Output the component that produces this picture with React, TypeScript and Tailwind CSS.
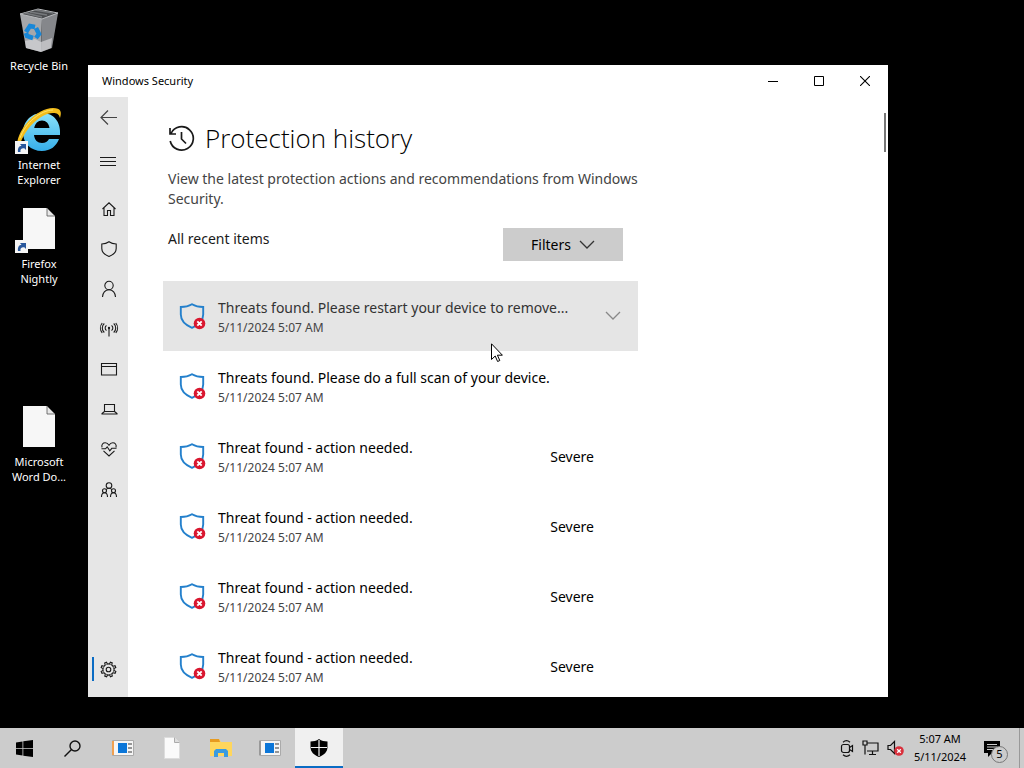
import type { ReactNode } from 'react'

const FONT = "font-['Noto_Sans','Open_Sans',sans-serif]"

type Threat = { title: string; date: string; severity?: string; selected?: boolean }

const THREATS: Threat[] = [
  { title: 'Threats found. Please restart your device to remove...', date: '5/11/2024 5:07 AM', selected: true },
  { title: 'Threats found. Please do a full scan of your device.', date: '5/11/2024 5:07 AM' },
  { title: 'Threat found - action needed.', date: '5/11/2024 5:07 AM', severity: 'Severe' },
  { title: 'Threat found - action needed.', date: '5/11/2024 5:07 AM', severity: 'Severe' },
  { title: 'Threat found - action needed.', date: '5/11/2024 5:07 AM', severity: 'Severe' },
  { title: 'Threat found - action needed.', date: '5/11/2024 5:07 AM', severity: 'Severe' },
]

const line = { fill: 'none', stroke: '#1a1a1a', strokeWidth: 1.1 }

const NAV: { name: string; icon: ReactNode }[] = [
  { name: 'Home', icon: <path d="M1.5 8 8 1.8 14.5 8M3 6.8v7.700h3.500V9.500h3v5H13V6.800" /> },
  { name: 'Virus & threat protection', icon: <path d="M8 .8C6 2.300 3.500 3 .8 3v4.500c0 3.800 3 6.300 7.200 8 4.200-1.700 7.200-4.200 7.200-8V3C12.500 3 10 2.300 8 .8z" /> },
  { name: 'Account protection', icon: <><circle cx="8" cy="4.500" r="4.200" /><path d="M1.500 16c0-4 2.700-7.300 6.500-7.300s6.500 3.300 6.500 7.300" /></> },
  { name: 'Firewall & network protection', icon: <><path d="M8 7v8.500M5.500 9.500a3 3 0 0 1 0-5M10.500 9.500a3 3 0 0 0 0-5M3.300 11.500a6 6 0 0 1 0-9M12.700 11.500a6 6 0 0 0 0-9M1.200 12a8 8 0 0 1 0-10M14.800 12a8 8 0 0 0 0-10" /><circle cx="8" cy="7" r=".6" /></> },
  { name: 'App & browser control', icon: <path d="M.5 2.500h15v11.500H.5zM.5 5.500h15" /> },
  { name: 'Device security', icon: <path d="M3.500 3.500h10v7h-10zM3.500 10.500 1 12.500v.5h15v-.5l-2.500-2" /> },
  { name: 'Device performance & health', icon: <path d="M1 6.300C.2 3.500 2 1.800 4.200 1.800 6 1.800 7.300 3 8 4.200c.7-1.200 2-2.400 3.800-2.400C14 1.800 15.800 3.500 15 6.300M.5 7.800h4l1.700-2 2.600 4 2-2.500h4.700M2.500 9.800 8 15l5.500-5.200" /> },
  { name: 'Family options', icon: <><circle cx="8" cy="4.500" r="2.800" /><circle cx="3.500" cy="9.800" r="2" /><circle cx="12.500" cy="9.800" r="2" /><path d="M.5 16c0-2.500 1-4.200 3-4.200s3 1.700 3 4.200M9.500 16c0-2.500 1-4.200 3-4.200s3 1.700 3 4.200M5 8.800c.8-1.100 1.800-1.500 3-1.500s2.200.4 3 1.500" /></> },
]

function GearIcon() {
  return (
    <svg width="17" height="17" viewBox="0 0 17 17" {...line}>
      <circle cx="8.500" cy="8.500" r="2.300" />
      <circle cx="8.500" cy="8.500" r="5.600" />
      {[0, 45, 90, 135, 180, 225, 270, 315].map((deg) => (
        <path key={deg} d="M7.300 3 7.500 1h2l.2 2" fill="#e6e6e6" transform={`rotate(${deg + 22} 8.500 8.500)`} />
      ))}
    </svg>
  )
}

function ThreatShield() {
  return (
    <svg className="shrink-0" width="28" height="28" viewBox="0 0 28 28">
      <path d="M13 2.200C9.500 4.300 6 5 1.800 5v7.500c0 6.300 4.200 10.300 11.200 13.300 7-3 11.200-7 11.200-13.300V5C20 5 16.500 4.300 13 2.200z" fill="none" stroke="#2480cc" strokeWidth="1.900" />
      <circle cx="20.500" cy="21.500" r="5.800" fill="#d9172f" />
      <path d="m18.300 19.300 4.400 4.400m0-4.400-4.400 4.400" stroke="#fff" strokeWidth="1.900" />
    </svg>
  )
}

function Chevron({ className }: { className: string }) {
  return (
    <svg className={className} width="16" height="10" viewBox="0 0 16 10" fill="none" stroke="currentColor" strokeWidth="1.300">
      <path d="m1 1 7 7 7-7" />
    </svg>
  )
}

function ShortcutBadge() {
  return (
    <>
      <rect x="0" y="35" width="13" height="13" fill="#f5f5f5" />
      <path d="M3 46c-.5-4 1-6 3.500-6.300L5 38h6v6l-1.700-1.700C6.500 42 5 43 5.500 46z" fill="#28579c" />
    </>
  )
}

function FileIcon({ shortcut }: { shortcut?: boolean }) {
  return (
    <svg width="48" height="48" viewBox="0 0 48 48">
      <path d="M8 3h24l8 8v33H8z" fill="#f7f7f7" />
      <path d="M32 3v8h8z" fill="#e8e8e8" stroke="#555" strokeWidth=".8" />
      {shortcut && <ShortcutBadge />}
    </svg>
  )
}

function RecycleIcon() {
  return (
    <svg width="48" height="48" viewBox="0 0 48 48">
      <path d="m5 7 22 4-1 34L11 41z" fill="#a5a7aa" />
      <path d="M27 11 43 6l-6 35-11 4z" fill="#85878b" />
      <path d="m5 7 18-5 20 4-16 6z" fill="#4a4c4f" stroke="#b9bbbe" />
      <path d="m10 6 17 4M15 5l17 3M20 3l18 3" stroke="#76797c" strokeWidth="1.500" />
      <path d="m10 34 10-2 6 3 11-4-1 10-10 4-15-4z" fill="#d5d6d8" opacity=".7" />
      <g fill="none" stroke="#1787d8" strokeWidth="4.500">
        <path d="m11 25 4-6 5 1" />
        <path d="m21 21 3 6-3 4" />
        <path d="m18 31-6-2-1-3" />
      </g>
    </svg>
  )
}

function ExplorerIcon() {
  return (
    <svg width="48" height="48" viewBox="0 0 48 48">
      <defs>
        <linearGradient id="ie" x2="0" y2="1">
          <stop stopColor="#8be2fb" />
          <stop offset="1" stopColor="#36aee8" />
        </linearGradient>
      </defs>
      <path d="M45 29H19c.5 5 3.500 8 8 8 3.500 0 5.500-1.500 7-4h10c-2.500 7-8.500 12-17 12C15.500 45 8 37 8 26.500S16 7 27 7c12 0 19 9 18 22zm-10.500-7c-.5-4.500-3.500-7.500-7.500-7.500S20 17.500 19.200 22z" fill="url(#ie)" />
      <path d="M2 39C3 22 22 2 38 2c8 0 9 4 7 10-1-4-3-5-7-5C25 7 9 24 5 39z" fill="#f3bd1c" />
      <path d="M5 32C10 17 26 4 38 4" fill="none" stroke="#ffe46b" />
      <ShortcutBadge />
    </svg>
  )
}

function DesktopIcon({ label, row, children }: { label: string; row: string; children: ReactNode }) {
  return (
    <a href="#" className={`flex flex-col items-center px-2 pt-[7px] text-center text-[11px] leading-[15px] text-white ${row}`}>
      {children}
      <span className="mt-[3px]">{label}</span>
    </a>
  )
}

function SetupIcon({ accent }: { accent: string }) {
  return (
    <svg width="22" height="17" viewBox="0 0 22 17">
      <path d="M.5.500h21v15H.5z" fill="#f5f5f5" stroke="#aaa" />
      <path d="M1 1v14" stroke={accent} strokeWidth="2" />
      <path d="M6 3h9v10H6z" fill="#0b76d8" />
      <path d="M16 4h4M16 8h4M16 12h4" stroke="#777" strokeWidth="1.300" />
    </svg>
  )
}

const TASKS: { name: string; active?: boolean; icon: ReactNode }[] = [
  { name: 'Setup', icon: <SetupIcon accent="#f0a050" /> },
  {
    name: 'Document',
    icon: (
      <svg width="16" height="22" viewBox="0 0 16 22">
        <path d="M.5.500h10l5 5v16H.5z" fill="#fafafa" stroke="#ddd" />
        <path d="M10.500.500v5h5" fill="#ddd" stroke="#aaa" />
      </svg>
    ),
  },
  {
    name: 'File Explorer',
    icon: (
      <svg width="24" height="20" viewBox="0 0 24 20">
        <path d="M1 1h9l2 3h11v14H1z" fill="#ffd65c" />
        <path d="M1 1h9l1 3H1z" fill="#e79b20" />
        <path d="M5 19v-6l2-2h10l2 2v6h-4v-4H9v4z" fill="#3a9be0" />
      </svg>
    ),
  },
  { name: 'Installer', icon: <SetupIcon accent="#999" /> },
  {
    name: 'Windows Security',
    active: true,
    icon: (
      <svg width="18" height="18" viewBox="0 0 18 18">
        <path d="M9 0C6.500 1.800 3.500 2.500.500 2.500V8c0 5 3.500 8 8.500 10 5-2 8.500-5 8.500-10V2.500c-3 0-6-.7-8.500-2.500z" fill="#000" />
        <path d="M9 1v16M1 8.500h16" stroke="#f2f2f2" strokeWidth="1.200" />
      </svg>
    ),
  },
]

function TitleBar() {
  return (
    <header className="flex h-8 shrink-0 items-center bg-white">
      <span className="flex-1 pt-px pl-[14px] text-[11px] text-black">Windows Security</span>
      <button aria-label="Minimize" className="flex h-8 w-[46px] items-center justify-center">
        <svg width="10" height="10" stroke="#000"><path d="M0 5.500h10" /></svg>
      </button>
      <button aria-label="Maximize" className="flex h-8 w-[46px] items-center justify-center">
        <svg width="10" height="10" stroke="#000" fill="none"><path d="M.5.500h9v9h-9z" /></svg>
      </button>
      <button aria-label="Close" className="flex h-8 w-[46px] items-center justify-center">
        <svg width="10" height="10" stroke="#000" strokeWidth="1.100"><path d="m0 0 10 10m0-10L0 10" /></svg>
      </button>
    </header>
  )
}

function Sidebar() {
  return (
    <nav className="flex w-10 shrink-0 flex-col items-center bg-[#e6e6e6] pb-2">
      <button aria-label="Back" className="flex h-10 w-10 items-center justify-center">
        <svg width="17" height="15" viewBox="0 0 17 15" fill="none" stroke="#444" strokeWidth="1.200"><path d="M17 7.500H1M8 .5l-7 7 7 7" /></svg>
      </button>
      <button aria-label="Open navigation" className="mb-1 flex h-12 w-10 items-center justify-center">
        <svg width="16" height="11" stroke="#1a1a1a"><path d="M0 1.500h16M0 5.500h16M0 9.500h16" /></svg>
      </button>
      {NAV.map((item) => (
        <button key={item.name} aria-label={item.name} className="flex h-10 w-10 items-center justify-center pl-[2px]">
          <svg width="16" height="16" viewBox="0 0 16 16" className="overflow-visible" {...line}>{item.icon}</svg>
        </button>
      ))}
      <button aria-label="Settings" className="mt-auto flex h-10 w-10 items-center pl-1">
        <span className="h-6 w-[2px] bg-[#0a6cc4]" />
        <span className="ml-[6px]"><GearIcon /></span>
      </button>
    </nav>
  )
}

function ThreatRow({ threat }: { threat: Threat }) {
  return (
    <li>
      <button className={`flex h-[70px] w-full items-center pr-[17px] pl-4 text-left ${threat.selected ? 'bg-[#e5e5e5] text-[#333]' : 'text-black'}`}>
        <ThreatShield />
        <span className="ml-[11px] flex flex-1 flex-col pt-1">
          <span className="text-[14px] leading-5">{threat.title}</span>
          <span className="text-[12px] leading-5 text-[#444]">{threat.date}</span>
        </span>
        {threat.severity && <span className="pr-[27px] text-[14px]">{threat.severity}</span>}
        {threat.selected && <Chevron className="text-[#888]" />}
      </button>
    </li>
  )
}

function SecurityWindow() {
  return (
    <section className="absolute top-[65px] right-[136px] bottom-[31px] left-[88px] flex flex-col bg-white">
      <TitleBar />
      <div className="flex min-h-0 flex-1">
        <Sidebar />
        <main className="min-w-0 flex-1 overflow-hidden pt-5 pl-[35px]">
          <div className="max-w-[480px] pl-[5px]">
            <h1 className="flex items-center gap-[10px] font-['Open_Sans','Noto_Sans',sans-serif] text-[26px] leading-[42px] font-light text-black">
              <svg width="27" height="27" viewBox="0 0 27 27" fill="none" stroke="#1a1a1a" strokeWidth="1.700">
                <path d="M3 8.500a11.700 11.700 0 1 1-.8 7.500M2 3v6h6M13.500 7v7l4.500 4.500" />
              </svg>
              Protection history
            </h1>
            <p className="mt-[10px] text-[14px] leading-5 text-[#444]">
              View the latest protection actions and recommendations from Windows Security.
            </p>
          </div>
          <div className="mt-[19px] flex max-w-[460px] justify-between pl-[5px]">
            <h2 className="text-[14px] leading-[22px] text-[#1a1a1a]">All recent items</h2>
            <button className="flex h-[33px] w-[120px] items-center justify-center gap-2 bg-[#cccccc] text-[14px] text-black">
              Filters
              <Chevron className="text-[#333]" />
            </button>
          </div>
          <ul className="mt-5 max-w-[475px]">
            {THREATS.map((threat, i) => (
              <ThreatRow key={i} threat={threat} />
            ))}
          </ul>
        </main>
        <div className="pt-4 pr-[2px]">
          <div className="h-[39px] w-[2px] bg-[#777]" />
        </div>
      </div>
    </section>
  )
}

function Taskbar() {
  return (
    <footer className="flex h-10 shrink-0 items-stretch bg-[#cccccc] text-black">
      <button aria-label="Start" className="flex w-12 items-center justify-center">
        <svg width="17" height="17" viewBox="0 0 17 17"><path d="M0 2.500 6.500 1.500V8H0zM7.300 1.300 17 0v8H7.300zM0 8.800h6.500v6.700l-6.500-1zM7.300 8.800H17V17l-9.700-1.300z" /></svg>
      </button>
      <button aria-label="Search" className="flex w-12 items-center justify-center">
        <svg width="17" height="17" viewBox="0 0 17 17" fill="none" stroke="#111" strokeWidth="1.400"><circle cx="11" cy="6" r="5" /><path d="M7.500 9.500.500 16.500" /></svg>
      </button>
      <div className="ml-[3px] flex gap-px">
        {TASKS.map((task) => (
          <button
            key={task.name}
            aria-label={task.name}
            className={`flex w-12 items-center justify-center border-b-2 pt-[2px] ${task.active ? 'border-[#0a6cc4] bg-[#f0f0f0]' : 'border-transparent'}`}
          >
            {task.icon}
          </button>
        ))}
      </div>
      <div className="ml-auto flex items-center gap-2">
        <button aria-label="Meet now">
          <svg width="14" height="17" viewBox="0 0 14 17" fill="none" stroke="#111" strokeWidth="1.200"><rect x="1.500" y="4.500" width="8" height="8" rx="2" /><path d="m9.500 7.500 3-2v6l-3-2M3 2.200C5 .5 8 .5 10 2.200M3 14.800c2 1.700 5 1.700 7 0" /></svg>
        </button>
        <button aria-label="Network">
          <svg width="17" height="16" viewBox="0 0 17 16" fill="none" stroke="#111" strokeWidth="1.200"><path d="M5 3h11v8H5M10.500 11v3M7 14.500h7M1 1h4v4H1zM3 5v9.500" /></svg>
        </button>
        <button aria-label="Volume">
          <svg width="17" height="16" viewBox="0 0 17 16"><path d="M1 5.500h2.500L7.500 1.500v12l-4-4H1z" fill="none" stroke="#111" strokeWidth="1.200" /><circle cx="12" cy="11" r="4.800" fill="#d9303c" /><path d="m10.200 9.200 3.600 3.600m0-3.600-3.600 3.600" stroke="#fff" strokeWidth="1.300" /></svg>
        </button>
        <button className="w-[56px] text-center text-[11px] leading-[18px] whitespace-nowrap">
          <span className="block">5:07 AM</span>
          <span className="block">5/11/2024</span>
        </button>
        <button aria-label="5 notifications" className="relative ml-[7px] h-10 w-[26px]">
          <svg width="18" height="18" viewBox="0 0 18 18" className="mt-px"><path d="M1 1h16v12H9l-4 4v-4H1z" /><path d="M4 4.500h10M4 7h10M4 9.500h8" stroke="#ccc" /></svg>
          <span className="absolute top-[18px] left-2 flex h-[17px] w-[17px] items-center justify-center rounded-full border border-[#777] bg-[#cccccc] text-[11px]">5</span>
        </button>
        <span className="ml-[2px] h-10 w-[5px] border-l border-[#999]" />
      </div>
    </footer>
  )
}

export default function App() {
  return (
    <div className={`flex h-screen flex-col overflow-hidden bg-black ${FONT}`}>
      <div className="relative min-h-0 flex-1">
        <div className="grid w-[78px] auto-rows-[99px]">
          <DesktopIcon label="Recycle Bin" row="row-start-1"><RecycleIcon /></DesktopIcon>
          <DesktopIcon label="Internet Explorer" row="row-start-2"><ExplorerIcon /></DesktopIcon>
          <DesktopIcon label="Firefox Nightly" row="row-start-3"><FileIcon shortcut /></DesktopIcon>
          <DesktopIcon label="Microsoft Word Do..." row="row-start-5"><FileIcon /></DesktopIcon>
        </div>
        <SecurityWindow />
        <svg className="absolute top-[343px] left-[491px]" width="12" height="19" viewBox="0 0 12 19">
          <path d="M.5.800v15.700l3.700-3.500 2.400 5.500 2.200-1-2.400-5.300h5z" fill="#fff" stroke="#000" />
        </svg>
      </div>
      <Taskbar />
    </div>
  )
}
